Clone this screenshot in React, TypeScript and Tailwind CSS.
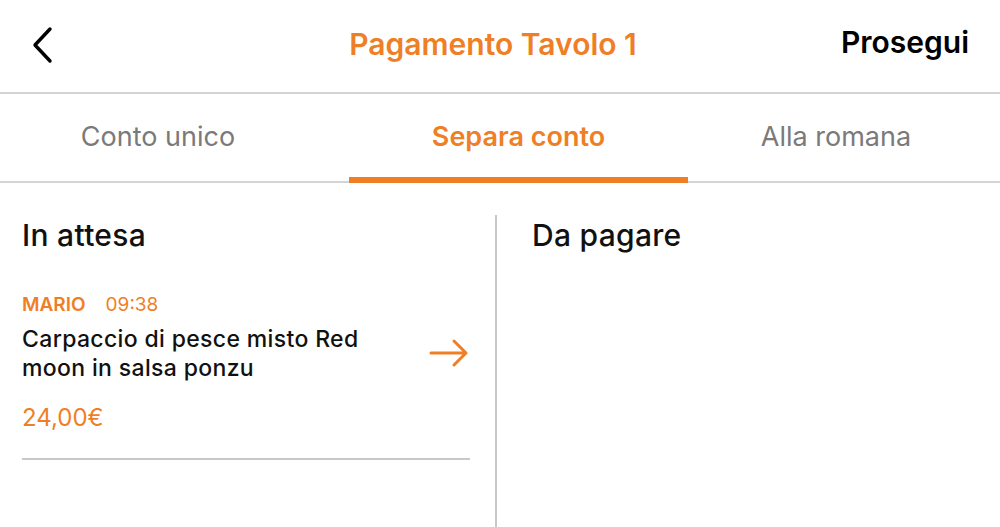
const tabs = [
  { label: 'Conto unico', active: false, cls: 'w-[316px]' },
  { label: 'Separa conto', active: true, cls: 'ml-[33px] w-[339px]' },
  { label: 'Alla romana', active: false, cls: 'flex-1 pr-[16px]' },
];

export default function App() {
  return (
    <div className="w-[1000px] h-[527px] bg-white overflow-hidden text-[#111]" style={{ fontFamily: 'Inter, "Noto Sans", sans-serif' }}>
      {/* header */}
      <div className="relative h-[94px] flex items-center justify-center border-b-2 border-[#d4d4d4]">
        <button className="absolute left-[28px] top-[26px]">
          <svg width="30" height="38" viewBox="0 0 30 38" fill="none">
            <path d="M22 3L7 19L22 35" stroke="#000" strokeWidth="3.4" strokeLinecap="round" strokeLinejoin="round" />
          </svg>
        </button>
        <h1 className="text-[30px] leading-[36px] font-semibold text-[#ef7f26] -ml-[14px] -mt-[4px]">Pagamento Tavolo 1</h1>
        <button className="absolute right-[31px] top-[24px] text-[30px] leading-[36px] font-semibold text-black">Prosegui</button>
      </div>

      {/* tabs */}
      <div className="flex h-[89px] border-b-2 border-[#d4d4d4]">
        {tabs.map((t) => (
          <div key={t.label} className={`${t.cls} relative flex items-center justify-center`}>
            <span className={`text-[27px] ${t.active ? 'font-semibold text-[#ef7f26]' : 'text-[#7a7a7a]'}`}>{t.label}</span>
            {t.active && <div className="absolute left-0 right-0 -bottom-[2px] h-[6px] bg-[#ef7f26]" />}
          </div>
        ))}
      </div>

      {/* body */}
      <div className="flex pt-[32px]">
        <div className="w-[497px] border-r-2 border-[#c8c8c8] h-[320px] pl-[22px] pr-[25px]">
          <h2 className="text-[30px] leading-[40px] font-medium tracking-[0.3px]">In attesa</h2>
          <div className="mt-[38px] border-b-2 border-[#c8c8c8] pb-[25px]">
            <div className="flex items-center gap-[20px] text-[19px] leading-[24px] text-[#ef7f26]">
              <span className="font-semibold">MARIO</span>
              <span>09:38</span>
            </div>
            <div className="flex items-center mt-[8px]">
              <p className="flex-1 text-[23px] leading-[29px] font-medium tracking-[0.35px]">
                Carpaccio di pesce misto Red
                <br />
                moon in salsa ponzu
              </p>
              <svg width="40" height="30" viewBox="0 0 40 30" fill="none" className="mr-[1px] -mt-[3px]">
                <path d="M2 15H37M25 3L37 15L25 27" stroke="#ef7f26" strokeWidth="3" strokeLinecap="round" strokeLinejoin="round" />
              </svg>
            </div>
            <div className="mt-[20px] text-[24px] leading-[30px] text-[#ef7f26]">24,00€</div>
          </div>
        </div>
        <div className="flex-1 pl-[35px]">
          <h2 className="text-[30px] leading-[40px] font-medium tracking-[0.3px]">Da pagare</h2>
        </div>
      </div>
    </div>
  );
}
